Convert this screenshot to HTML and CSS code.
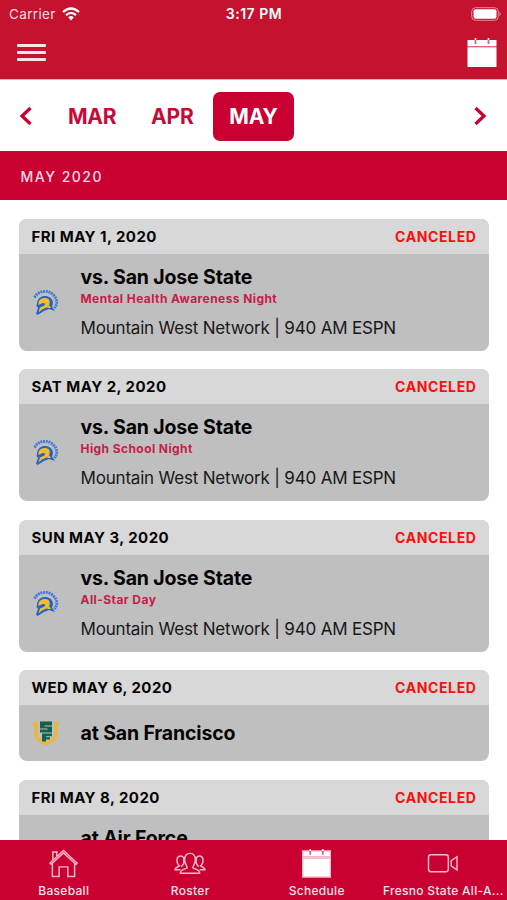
FILE: index.html
```html
<!DOCTYPE html>
<html lang="en">
<head>
<meta charset="utf-8">
<title>Schedule</title>
<link rel="stylesheet" href="styles.css">
</head>
<body>
<svg class="defs" width="0" height="0" aria-hidden="true">
  <symbol id="calendar" viewBox="0 0 30 30">
    <path fill="#fff" d="M.5 2H29.500V8H.5zM.5 9.300H29.500V29H.5z"/>
    <path fill="#f3c3cd" d="M.5 8H29.500V9.300H.5z" opacity=".5"/>
    <path stroke="#d8607a" stroke-width="1.800" d="M8.500 2V6M21.500 2V6"/>
    <path stroke="#fff" stroke-width="1.600" d="M8.500 0V2M21.500 0V2"/>
  </symbol>
  <symbol id="spartan" viewBox="0 0 26 27">
    <path fill="none" stroke="#3a78dc" stroke-width="2.800" stroke-dasharray="1.900 .8" d="M1.500 8.500C5 1.500 15 .5 20 5.500C25 10.500 24.500 15 21.500 19"/>
    <path fill="#2563c6" d="M4 14C5 8 10 6 15 7.500C20 9 21 14 19 17.500L22 22L16 20L11 22L4.500 26L3 24.500L5 19L3.500 17z"/>
    <path fill="#f5bd2b" d="M5.500 13C7 9 12 8 15.500 10C17.500 12.500 17 16 14.500 18L9 20.500L5.500 23.500L7 18.500L11.500 16.500L12.500 14.500L9.500 14L5.500 16z"/>
    <path fill="#f5bd2b" d="M16 16L18 19L14 19z"/>
  </symbol>
  <symbol id="shield" viewBox="0 0 26 27">
    <path fill="none" stroke="#edb63b" stroke-width="3.400" d="M0 3.500H3V15C3.500 20 8 22 13 23.500C18 22 22.500 20 23 15V3.500H26"/>
    <path fill="#12614b" d="M7 1.500H19V5.500H11.500V6.500H19V12.500H7V9.500H14.500V8.500H7zM9 13.500H19V16.300H13V17.200H17V19.500H13V21.500H9z"/>
  </symbol>
</svg>
<div class="app">
  <header class="top">
    <div class="status">
      <span class="carrier">Carrier</span>
      <svg class="wifi" viewBox="0 0 18 14"><g fill="none" stroke="#fff" stroke-width="2.300"><path d="M1 5Q9-2 17 5"/><path d="M4 8.200Q9 3.600 14 8.200"/></g><path fill="#fff" d="M6.200 10.300Q9 7.800 11.800 10.300L9 13.500z"/></svg>
      <span class="clock">3:17 PM</span>
      <svg class="battery" viewBox="0 0 31 14"><rect x=".7" y=".7" width="26.600" height="12.600" rx="3.800" fill="none" stroke="#e58c9a" stroke-width="1"/><rect x="2.500" y="2.300" width="23" height="9.400" rx="2" fill="#fff"/><path fill="#e58c9a" d="M28.500 4.800Q31 7 28.500 9.200z"/></svg>
    </div>
    <div class="nav">
      <div class="menu"><i></i><i></i><i></i></div>
      <svg class="cal"><use href="#calendar"/></svg>
    </div>
  </header>
  <nav class="months">
    <svg class="chev" viewBox="0 0 14 20"><path d="M11.500 2L3 10L11.500 18"/></svg>
    <span class="month mar">MAR</span>
    <span class="month apr">APR</span>
    <span class="month on">MAY</span>
    <svg class="chev next" viewBox="0 0 14 20"><path d="M2.500 2L11 10L2.500 18"/></svg>
  </nav>
  <h1 class="band">MAY 2020</h1>
  <main class="list">
    <article class="card">
      <div class="head"><b class="date">FRI MAY 1, 2020</b><b class="state">CANCELED</b></div>
      <div class="body"><svg class="logo"><use href="#spartan"/></svg><div class="info"><h2>vs. San Jose State</h2><p class="promo">Mental Health Awareness Night</p><p class="media">Mountain West Network | 940 AM ESPN</p></div></div>
    </article>
    <article class="card">
      <div class="head"><b class="date">SAT MAY 2, 2020</b><b class="state">CANCELED</b></div>
      <div class="body"><svg class="logo"><use href="#spartan"/></svg><div class="info"><h2>vs. San Jose State</h2><p class="promo">High School Night</p><p class="media">Mountain West Network | 940 AM ESPN</p></div></div>
    </article>
    <article class="card">
      <div class="head"><b class="date">SUN MAY 3, 2020</b><b class="state">CANCELED</b></div>
      <div class="body"><svg class="logo"><use href="#spartan"/></svg><div class="info"><h2>vs. San Jose State</h2><p class="promo">All-Star Day</p><p class="media">Mountain West Network | 940 AM ESPN</p></div></div>
    </article>
    <article class="card short">
      <div class="head"><b class="date">WED MAY 6, 2020</b><b class="state">CANCELED</b></div>
      <div class="body"><svg class="logo"><use href="#shield"/></svg><div class="info"><h2>at San Francisco</h2></div></div>
    </article>
    <article class="card">
      <div class="head"><b class="date">FRI MAY 8, 2020</b><b class="state">CANCELED</b></div>
      <div class="body"><div class="logo"></div><div class="info"><h2>at Air Force</h2></div></div>
    </article>
  </main>
  <footer class="tabs">
    <div class="tab"><svg viewBox="0 0 30 30"><path d="M2 16L1 14.500L15 1.500L29 14.500L28 16L15 4L2 16M3.500 15V28.500H10.500V18.500H19.500V28.500H26.500V15M4 11.500V3H8V8M3 3H9"/></svg><span>Baseball</span></div>
    <div class="tab"><svg class="wide" viewBox="0 0 34 30"><path d="M7 25C7 21 12 21 14 19.500C14 17 11.500 16 11.500 11C11.500 6.500 13.500 4.500 17 4.500C20.500 4.500 22.500 6.500 22.500 11C22.500 16 20 17 20 19.500C22 21 27 21 27 25zM7 21.500H1.500C1.500 19 4 19 6 17.500C4 16 3.500 14 3.500 11.500C3.500 6.500 8.500 6.500 10.500 9V14C10 17 8 17 8.500 18.500M27 21.500H32.500C32.500 19 30 19 28 17.500C30 16 30.500 14 30.500 11.500C30.500 6.500 25.500 6.500 23.500 9V14C24 17 26 17 25.500 18.500"/></svg><span>Roster</span></div>
    <div class="tab"><svg><use href="#calendar"/></svg><span>Schedule</span></div>
    <div class="tab"><svg class="wide" viewBox="0 0 34 30"><rect x="2" y="6" width="20.500" height="17.500" rx="2.500"/><path d="M25.500 12L31.500 8V21.500L25.500 17.500z"/></svg><span>Fresno State All-A...</span></div>
  </footer>
</div>
</body>
</html>
```
FILE: styles.css
```css
* { box-sizing: border-box; margin: 0; padding: 0; }
body { font-family: Inter, "Liberation Sans", sans-serif; background: #fff; color: #050505; }
svg { display: block; flex: none; }
.defs { position: absolute; }
.app { width: 507px; height: 900px; overflow: hidden; display: flex; flex-direction: column; }
.top { flex: none; height: 80px; background: #c4122f; border-bottom: 1px solid #edacb9; color: #fff; }
.status { height: 27px; display: grid; grid-template-columns: 47px 18px 1fr 31px; column-gap: 5px; align-items: center; padding: 0 5px 0 9px; }
.carrier { font-size: 13.5px; letter-spacing: .35px; color: #fbdce1; }
.wifi { width: 18px; height: 14px; margin-left: 1px; }
.clock { font-size: 14px; font-weight: 600; letter-spacing: .5px; justify-self: center; transform: translateX(-21px); }
.battery { width: 31px; height: 14px; }
.nav { display: flex; justify-content: space-between; padding: 11px 10px 0 17px; }
.menu { display: flex; flex-direction: column; gap: 4px; padding-top: 6px; }
.menu i { width: 29px; height: 3px; background: #fbe4e8; border-radius: 1px; }
.cal { width: 30px; height: 30px; }
.months { flex: none; height: 71px; display: flex; align-items: center; padding: 1px 20px 0 19px; }
.chev { width: 14px; height: 20px; fill: none; stroke: #cb0032; stroke-width: 3.200; }
.next { margin-left: auto; }
.month { font-size: 21px; font-weight: 700; color: #c60b38; line-height: 49px; letter-spacing: -.2px; }
.mar { margin-left: 35px; width: 83px; }
.apr { width: 62px; }
.on { width: 81px; text-align: center; background: #cb0032; color: #fff; border-radius: 7px; }
.band { flex: none; height: 49px; padding-left: 20.500px; background: #cb0032; color: #fbdbe3; font-size: 14px; font-weight: 500; letter-spacing: 1.5px; line-height: 51px; }
.list { flex: 1; min-height: 0; overflow: hidden; display: flex; flex-direction: column; gap: 18.300px; padding: 19px 18.500px 0 19px; }
.card { flex: none; height: 132px; display: flex; flex-direction: column; border-radius: 8px; overflow: hidden; background: #bfbfbf; }
.short { height: 91.500px; }
.head { flex: none; height: 35px; display: flex; justify-content: space-between; align-items: center; padding: 0 12px 0 12.500px; background: #d8d8d8; }
.date { font-size: 15px; font-weight: 700; letter-spacing: .45px; }
.state { font-size: 14px; font-weight: 700; letter-spacing: .62px; color: #fa0f0c; }
.body { flex: 1; display: flex; padding-left: 14px; }
.logo { width: 26px; height: 27px; align-self: center; margin-right: 21.500px; }
.info { padding-top: 11px; white-space: nowrap; }
h2 { font-size: 19.500px; font-weight: 700; line-height: 24px; letter-spacing: -.15px; }
.promo { font-size: 12px; font-weight: 700; line-height: 18px; letter-spacing: .42px; color: #c61c49; padding-top: 1px; }
.media { font-size: 17px; line-height: 22px; margin-top: 9px; letter-spacing: -.19px; color: #181818; }
.short .info { padding-top: 16px; }
.tabs { flex: none; height: 60px; display: grid; grid-template-columns: repeat(4, 126.500px); background: #cb0032; }
.tab { display: flex; flex-direction: column; align-items: center; padding: 9px 0 0 1px; color: #fce0e7; font-size: 12px; font-weight: 500; letter-spacing: .3px; white-space: nowrap; }
.tab svg { width: 29px; height: 29px; fill: none; stroke: #f9b9c9; stroke-width: 1.500; }
.tab .wide { width: 34px; }
.tab span { line-height: 15px; margin-top: 5px; }
```
